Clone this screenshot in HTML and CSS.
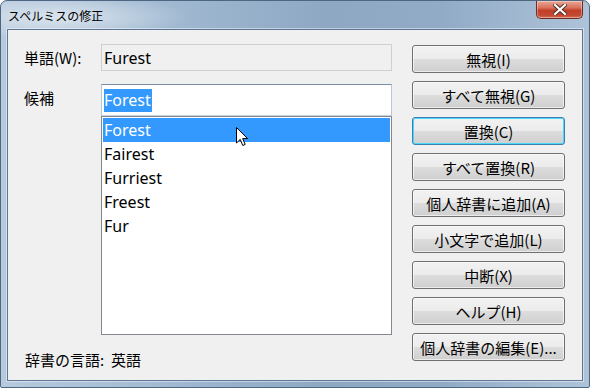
FILE: index.html
```html
<!DOCTYPE html>
<html lang="ja">
<head>
  <meta charset="UTF-8" />
  <title>スペルミスの修正</title>
  <link rel="stylesheet" href="styles.css">
</head>
<body>
  <div class="window">
    <div class="titlebar">
      <span class="title">スペルミスの修正</span>
      <div class="close">
        <svg width="14" height="11" viewBox="0 0 14 11">
          <path d="M2 1 L12 10 M12 1 L2 10" stroke="#4a2a26" stroke-width="4" stroke-linecap="square"/>
          <path d="M2 1 L12 10 M12 1 L2 10" stroke="#fff" stroke-width="2.2" stroke-linecap="square"/>
        </svg>
      </div>
    </div>

    <div class="client">
      <div class="main">
        <div class="row">
          <span class="label">単語(W):</span>
          <div class="field readonly">Furest</div>
        </div>
        <div class="row cand">
          <span class="label">候補</span>
          <div class="cand-box">
            <div class="field input"><span class="sel">Forest</span></div>
            <ul class="list">
              <li class="active">Forest</li>
              <li>Fairest</li>
              <li>Furriest</li>
              <li>Freest</li>
              <li>Fur</li>
            </ul>
          </div>
        </div>
        <div class="lang">辞書の言語:&nbsp; 英語</div>
      </div>

      <div class="buttons">
        <button>無視(I)</button>
        <button>すべて無視(G)</button>
        <button class="default">置換(C)</button>
        <button>すべて置換(R)</button>
        <button>個人辞書に追加(A)</button>
        <button>小文字で追加(L)</button>
        <button>中断(X)</button>
        <button>ヘルプ(H)</button>
        <button>個人辞書の編集(E)...</button>
      </div>
    </div>

    <svg class="cursor" width="13" height="20" viewBox="0 0 13 20">
      <path d="M0.5 0.5 L0.5 16 L4.2 12.4 L6.8 18.5 L9.2 17.4 L6.7 11.6 L11.6 11.6 Z" fill="#fff" stroke="#000" stroke-width="1"/>
    </svg>
  </div>
</body>
</html>
```

FILE: styles.css
```css
:root {
  --cjk: "Noto Sans CJK JP", "Noto Sans", sans-serif;
  --latin: "Noto Sans", "Noto Sans CJK JP", sans-serif;
  --client: #f0f0f0;
  --sel: #3399ff;
}
* { box-sizing: border-box; margin: 0; padding: 0; }
body {
  width: 590px;
  height: 388px;
  overflow: hidden;
  background: #fff;
}
.window {
  position: relative;
  width: 590px;
  height: 388px;
  border: 1px solid #4d6682;
  border-radius: 7px 7px 2px 2px;
  background:
    radial-gradient(ellipse 130px 22px at 60px 16px, rgba(255,255,255,.55), rgba(255,255,255,0)),
    linear-gradient(90deg, #b7cadd 0%, #a3bbd3 25%, #8ea8c4 55%, #91abc7 75%, #aec3d8 100%);
  padding: 0 6px 6px 6px;
  display: flex;
  flex-direction: column;
}
.titlebar {
  height: 28px;
  display: flex;
  align-items: flex-start;
}
.title {
  font-family: var(--cjk);
  font-size: 12px;
  color: #000;
  padding: 6px 0 0 1px;
}
.close {
  margin-left: auto;
  width: 47px;
  height: 18px;
  border: 1px solid #6a2f28;
  border-top: none;
  border-radius: 0 0 5px 5px;
  background: linear-gradient(#e9a898 0%, #d9705a 40%, #c13f28 55%, #c34a32 85%, #d9735c 100%);
  display: flex;
  align-items: center;
  justify-content: center;
  box-shadow: inset 0 0 0 1px rgba(255,255,255,.35);
}
.client {
  flex: 1;
  border: 1px solid #5c7694;
  box-shadow: 0 0 0 1px rgba(255,255,255,.45);
  background: var(--client);
  display: flex;
  padding: 14px 17px 0 16px;
  gap: 20px;
}
.main {
  width: 368px;
  display: flex;
  flex-direction: column;
}
.row {
  display: flex;
  align-items: center;
}
.label {
  width: 77px;
  flex-shrink: 0;
  font-family: var(--cjk);
  font-size: 15px;
  color: #000;
}
.field {
  width: 291px;
  font-family: var(--latin);
  font-size: 16px;
  color: #000;
  padding-left: 2px;
  display: flex;
  align-items: center;
}
.readonly {
  height: 27px;
  border: 1px solid #cfcfcf;
  background: #f0f0f0;
}
.cand {
  align-items: flex-start;
  margin-top: 13px;
}
.cand .label {
  padding-top: 3px;
}
.cand-box {
  width: 291px;
}
.input {
  height: 32px;
  border: 1px solid #abadb3;
  border-color: #7a8ea8 #b9c6d4 #c9d3de #b9c6d4;
  background: #fff;
  padding-left: 2px;
}
.sel {
  background: var(--sel);
  color: #fff;
  line-height: 23px;
  padding: 0 1px 0 0;
}
.list {
  list-style: none;
  height: 219px;
  border: 1px solid #828790;
  background: #fff;
  padding: 1px;
}
.list li {
  height: 24px;
  line-height: 24px;
  font-family: var(--latin);
  font-size: 16px;
  color: #000;
  padding-left: 1px;
}
.list li.active {
  background: var(--sel);
  color: #fff;
}
.lang {
  margin-top: 14px;
  margin-left: 1px;
  font-family: var(--cjk);
  font-size: 15px;
  color: #000;
}
.buttons {
  width: 153px;
  flex-shrink: 0;
  display: flex;
  flex-direction: column;
  gap: 8px;
  padding-top: 1px;
}
.buttons button {
  height: 28px;
  border: 1px solid #707070;
  border-radius: 3px;
  background: linear-gradient(#f2f2f2 0%, #ebebeb 49%, #dddddd 50%, #cfcfcf 100%);
  box-shadow: inset 0 0 0 1px rgba(255,255,255,.6);
  font-family: var(--cjk);
  font-size: 15px;
  color: #000;
  white-space: nowrap;
}
.buttons button.default {
  border-color: #3c7fb1;
  box-shadow: inset 0 0 0 1px #48d8fb;
}
.cursor {
  position: absolute;
  left: 235px;
  top: 126px;
}
```
